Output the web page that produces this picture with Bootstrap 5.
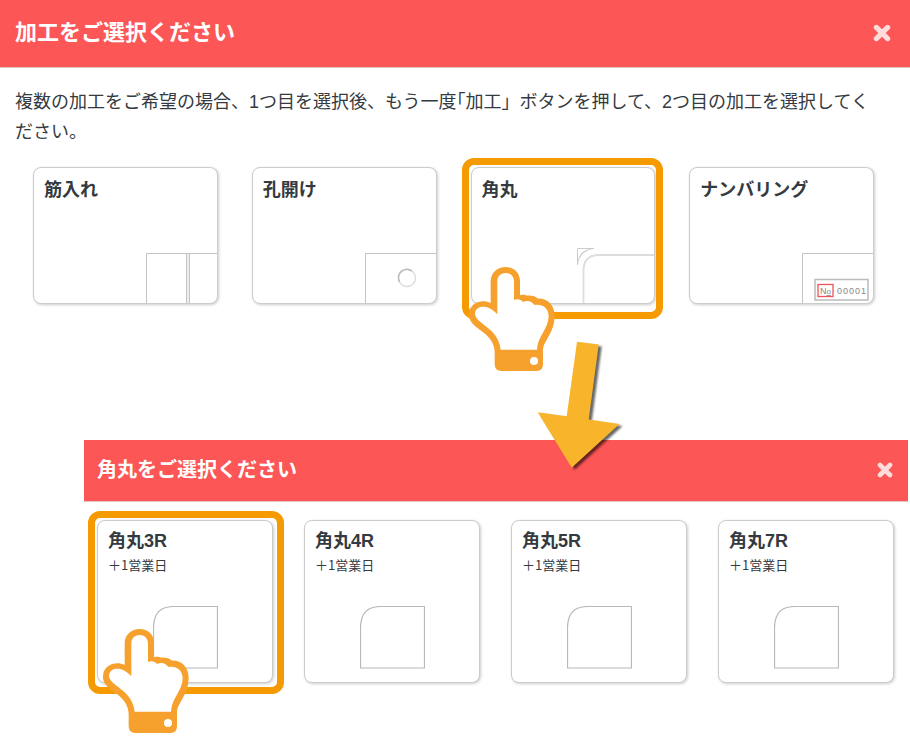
<!DOCTYPE html>
<html lang="ja">
<head>
<meta charset="utf-8">
<meta name="viewport" content="width=device-width, initial-scale=1">
<title>加工をご選択ください</title>
<link href="https://cdn.jsdelivr.net/npm/bootstrap@5.3.0/dist/css/bootstrap.min.css" rel="stylesheet">
<style>
body { font-family: "Liberation Sans", "Noto Sans CJK JP", sans-serif; color: #343a40; background: #fff; }
.panel-head { background: #fc5656; border-bottom: 1px solid #e3c4c4; color: #fff; }
.panel-head h1, .panel-head h2 { font-weight: 700; line-height: 30px; }
.main-head { padding: 18px 19px 19px 15px; }
.main-head h1 { font-size: 22px; }
.sub-head { padding: 15px 15px 16px 13px; }
.sub-head h2 { font-size: 20px; }
.close-btn { line-height: 0; color: #ffdcdc; }
.intro { font-size: 18px; line-height: 30px; padding: 19px 30px 20px 15px; }
.half { font-feature-settings: "halt"; }
.choices { grid-template-columns: repeat(4, minmax(0, 1fr)); }
.main-choices { gap: 34px; padding: 0 36px 0 33px; }
.sub-choices { gap: 31px; padding: 18px 14px 58px 13px; }
.sub-panel { margin: 136px 2px 0 84px; }
.choice { background: #fff; border: 1px solid #ccc; border-radius: 8px; box-shadow: 1px 1px 3px #0003; color: #343a40; }
.choice-title { font-size: 18px; font-weight: 700; line-height: 24px; }
.main-choices .choice { min-height: 137px; }
.main-choices .choice-title { padding: 10px 10px 0; }
.sub-choices .choice { min-height: 163px; padding: 8px 10px 13px; }
.choice-note { font-family: "Noto Sans CJK JP", sans-serif; font-size: 13px; line-height: 24px; }
.picked::after { content: ""; position: absolute; border: 7px solid #f59a00; border-radius: 12px; pointer-events: none; inset: -9px -11px -11px -9px; }
.main-choices .picked::after { inset: -9px -8px -15px -9px; }
.hand { position: absolute; z-index: 2; left: 5px; top: 108px; pointer-events: none; }
.main-choices .hand { left: -3px; top: 99px; }
.arrow { position: absolute; z-index: 3; left: 450px; top: -102px; filter: drop-shadow(3px 2px 1px #0009); pointer-events: none; }
</style>
<script src="https://cdn.jsdelivr.net/npm/bootstrap@5.3.0/dist/js/bootstrap.bundle.min.js"></script>
</head>
<body>
<svg class="d-none" aria-hidden="true">
  <symbol id="close" viewBox="0 0 16 16"><path d="M3 3 13 13M13 3 3 13" stroke="currentColor" stroke-width="4.6" stroke-linecap="round"/></symbol>
  <symbol id="hand" viewBox="66 114 264 318">
    <path fill="#f6a12d" d="M146 372V408Q146 429 166 429H272Q291 429 291 408V362C294 338 326 312 326 264C326 229 301 210 276 212C268 205 258 202 244 203C238 200 230 200 222 202V160C222 133 204 117 179 117C154 117 134 134 134 160V225C110 213 72 222 69 257C67 279 84 293 102 306C128 324 145 342 146 372Z"/>
    <path fill="#fff" d="M164 365C160 325 133 305 108 286C94 275 87 266 87 257C88 238 107 234 121 237C135 241 145 250 154 259V160C154 143 166 135 179 135C193 135 204 145 204 160V216C214 212 224 213 231 222C246 215 259 221 265 231C286 227 307 237 308 264C308 303 274 325 273 365Z"/>
    <circle cx="264" cy="399" r="12" fill="#fff"/>
  </symbol>
  <symbol id="corner" viewBox="0 0 65 63"><path fill="none" stroke="#b8b8b8" stroke-width="1.2" d="M64.500 .5H20C6 1 1 8 .5 21V62H64.500Z"/></symbol>
</svg>
<main>
  <section>
    <header class="panel-head main-head d-flex align-items-center justify-content-between">
      <h1 class="m-0">加工をご選択ください</h1>
      <button type="button" class="close-btn btn p-0 border-0" aria-label="閉じる"><svg width="18" height="18"><use href="#close"/></svg></button>
    </header>
    <p class="intro m-0">複数の加工をご希望の場合、1つ目を選択後、もう一度<span class="half">「</span>加工」ボタンを押して、2つ目の加工を選択してください。</p>
    <div class="choices main-choices d-grid">
      <div class="position-relative">
        <button type="button" class="choice w-100 p-0 d-flex flex-column justify-content-between text-start overflow-hidden">
          <span class="choice-title">筋入れ</span>
          <svg class="align-self-end" width="71" height="50" fill="none" stroke="#c4c4c4"><path d="M.5 51V.5H71"/><path fill="#eee" d="M40.500 .5h3V52h-3z"/></svg>
        </button>
      </div>
      <div class="position-relative">
        <button type="button" class="choice w-100 p-0 d-flex flex-column justify-content-between text-start overflow-hidden">
          <span class="choice-title">孔開け</span>
          <svg class="align-self-end" width="71" height="50" fill="none" stroke="#c4c4c4"><path d="M.5 51V.5H71"/><circle cx="42" cy="25" r="8.500" stroke="#ddd" stroke-width="1.500"/><path d="M34.500 29A8.500 8.500 0 0 1 47 18" stroke="#bbb" stroke-width="1.500"/></svg>
        </button>
      </div>
      <div class="picked position-relative">
        <button type="button" class="choice w-100 p-0 d-flex flex-column justify-content-between text-start overflow-hidden">
          <span class="choice-title">角丸</span>
          <svg class="align-self-end" width="77" height="55" fill="none" stroke="#ccc"><path d="M.5 17V.5H17C8 1 1 8 .5 17ZM2 10Q4 4 10 2"/><path d="M6.500 56V23Q6.500 7 22 7H78" stroke="#ddd" stroke-width="1.800"/></svg>
        </button>
        <svg class="hand" width="88" height="106" aria-hidden="true"><use href="#hand"/></svg>
      </div>
      <div class="position-relative">
        <button type="button" class="choice w-100 p-0 d-flex flex-column justify-content-between text-start overflow-hidden">
          <span class="choice-title">ナンバリング</span>
          <svg class="align-self-end" width="71" height="50" fill="none" stroke="#c4c4c4"><path d="M.5 51V.5H71"/><rect x="13" y="26.500" width="53" height="20.500" stroke="#bbb" stroke-width="1.500"/><rect x="16" y="31.500" width="15" height="12" stroke="#f0525a" stroke-width="1.300"/><g fill="#888" stroke="none" font-family="Liberation Sans, sans-serif" font-size="9"><text x="18" y="41">N<tspan font-size="8" text-decoration="underline">o</tspan></text><text y="41" x="35 41 47 53 59">00001</text></g></svg>
        </button>
      </div>
    </div>
  </section>
  <section class="sub-panel position-relative">
    <header class="panel-head sub-head d-flex align-items-center justify-content-between">
      <h2 class="m-0">角丸をご選択ください</h2>
      <button type="button" class="close-btn btn p-0 border-0" aria-label="閉じる"><svg width="16" height="16"><use href="#close"/></svg></button>
    </header>
    <svg class="arrow" width="90" height="132" viewBox="534 338 90 132" aria-hidden="true"><path fill="#f8b52c" d="M577 341.700 598.700 344.500 588.700 419.500 619.500 424 571.700 467.700 537.700 412.300 566.700 416.300Z"/></svg>
    <div class="choices sub-choices d-grid">
      <div class="picked position-relative">
        <button type="button" class="choice w-100 d-flex flex-column text-start">
          <span class="choice-title">角丸3R</span><span class="choice-note">＋1営業日</span>
          <svg class="mt-auto mx-auto" width="65" height="63"><use href="#corner"/></svg>
        </button>
        <svg class="hand" width="88" height="106" aria-hidden="true"><use href="#hand"/></svg>
      </div>
      <div class="position-relative">
        <button type="button" class="choice w-100 d-flex flex-column text-start">
          <span class="choice-title">角丸4R</span><span class="choice-note">＋1営業日</span>
          <svg class="mt-auto mx-auto" width="65" height="63"><use href="#corner"/></svg>
        </button>
      </div>
      <div class="position-relative">
        <button type="button" class="choice w-100 d-flex flex-column text-start">
          <span class="choice-title">角丸5R</span><span class="choice-note">＋1営業日</span>
          <svg class="mt-auto mx-auto" width="65" height="63"><use href="#corner"/></svg>
        </button>
      </div>
      <div class="position-relative">
        <button type="button" class="choice w-100 d-flex flex-column text-start">
          <span class="choice-title">角丸7R</span><span class="choice-note">＋1営業日</span>
          <svg class="mt-auto mx-auto" width="65" height="63"><use href="#corner"/></svg>
        </button>
      </div>
    </div>
  </section>
</main>
</body>
</html>
